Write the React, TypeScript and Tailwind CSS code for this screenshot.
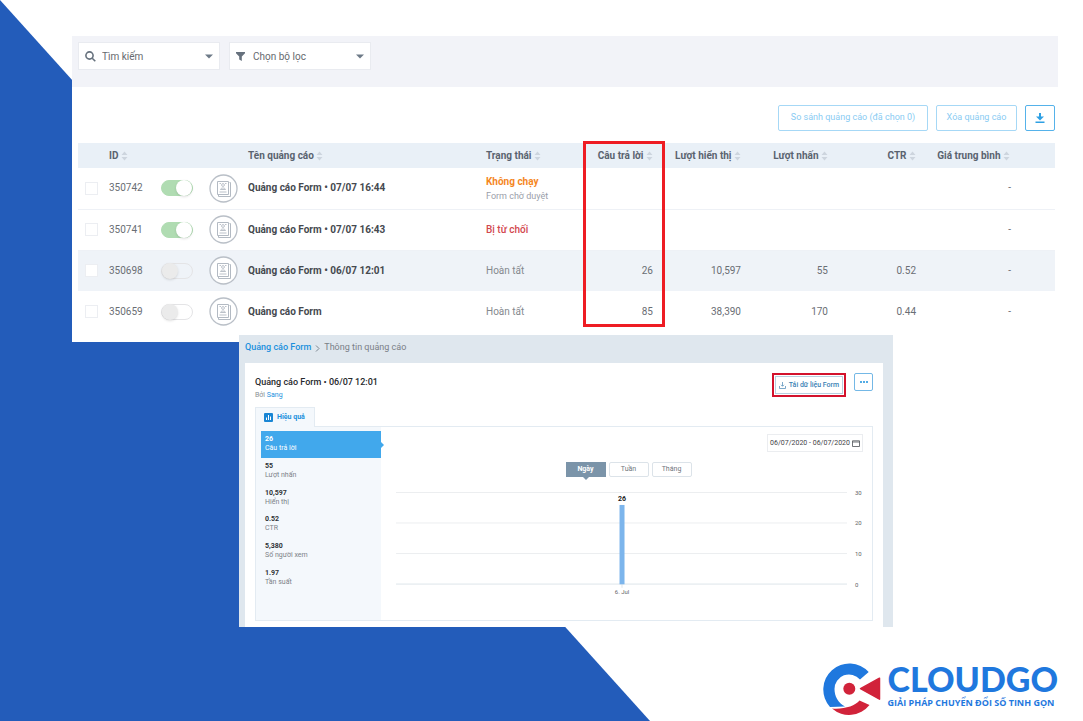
import React from 'react';

const ads = [
  { id: '350742', on: true, name: 'Quảng cáo Form • 07/07 16:44', status: 'Không chạy', note: 'Form chờ duyệt', tone: 'text-[#f5871f] font-bold', answers: '', views: '', clicks: '', ctr: '' },
  { id: '350741', on: true, name: 'Quảng cáo Form • 07/07 16:43', status: 'Bị từ chối', note: '', tone: 'text-[#d2474e] font-medium', answers: '', views: '', clicks: '', ctr: '' },
  { id: '350698', on: false, name: 'Quảng cáo Form • 06/07 12:01', status: 'Hoàn tất', note: '', tone: 'text-[#85898e]', answers: '26', views: '10,597', clicks: '55', ctr: '0.52' },
  { id: '350659', on: false, name: 'Quảng cáo Form', status: 'Hoàn tất', note: '', tone: 'text-[#85898e]', answers: '85', views: '38,390', clicks: '170', ctr: '0.44' },
];

const stats = [
  { value: '26', label: 'Câu trả lời' },
  { value: '55', label: 'Lượt nhấn' },
  { value: '10,597', label: 'Hiển thị' },
  { value: '0.52', label: 'CTR' },
  { value: '5,380', label: 'Số người xem' },
  { value: '1.97', label: 'Tần suất' },
];

const Sort: React.FC = () => (
  <svg className="inline-block w-[7px] h-[10px] align-middle" viewBox="0 0 7 10" fill="#cdd5de">
    <path d="M3.5 0.5 6.5 4h-6zM3.5 9.5l3-3.5h-6z" />
  </svg>
);

const Caret: React.FC = () => (
  <svg className="w-2 h-[5px] shrink-0" viewBox="0 0 8 5" fill="#6d7a87">
    <path d="M0 0.5h8L4 4.5z" />
  </svg>
);

const FormIcon: React.FC = () => (
  <svg className="block w-[29px] h-[29px]" viewBox="0 0 29 29" fill="none" stroke="#b3bac3">
    <circle cx="14.5" cy="14.5" r="13.5" fill="#fff" stroke="#b9bfc7" strokeWidth="1.3" />
    <path d="M8.5 7.5h11v13h-11z" />
    <path d="M20.5 8.5h1v14h-12v-1.5" />
    <circle cx="14" cy="11" r="1.4" strokeWidth="0.9" />
    <path d="M11.5 15.5c.3-2 4.7-2 5 0zM10.5 18h7M10.5 9.500h1.5M16 9.500h1.5" strokeWidth="0.9" />
  </svg>
);

const Filters: React.FC = () => (
  <div className="flex gap-[9px] h-[51px] px-[6px] pt-[6px] bg-[#f2f3f8]">
    <label className="flex items-center w-[142px] h-7 px-[6px] bg-white border border-[#e9ebf0]">
      <svg className="w-[11px] h-[11px] shrink-0" viewBox="0 0 11 11" fill="none" stroke="#66717d" strokeWidth="1.6">
        <circle cx="4.5" cy="4.5" r="3.6" />
        <path d="M7.2 7.2 10.3 10.3" />
      </svg>
      <select aria-label="Tìm kiếm" className="flex-1 min-w-0 h-full px-[6px] appearance-none bg-transparent text-[10px] text-[#66696e] outline-none">
        <option>Tìm kiếm</option>
      </select>
      <Caret />
    </label>
    <label className="flex items-center w-[142px] h-7 px-[6px] bg-white border border-[#e9ebf0]">
      <svg className="w-[9px] h-[9px] shrink-0" viewBox="0 0 9 9" fill="#66717d">
        <path d="M0 0h9v1.2L5.8 4.5V9L3.2 7.5v-3L0 1.2z" />
      </svg>
      <select aria-label="Chọn bộ lọc" className="flex-1 min-w-0 h-full px-2 appearance-none bg-transparent text-[10px] text-[#66696e] outline-none">
        <option>Chọn bộ lọc</option>
      </select>
      <Caret />
    </label>
  </div>
);

const AdTable: React.FC = () => (
  <table className="w-full table-fixed border-collapse text-[10px] leading-[14px] text-[#6a6e74]">
    <colgroup>
      <col className="w-[31px]" />
      <col className="w-[52px]" />
      <col className="w-[48px]" />
      <col className="w-[39px]" />
      <col />
      <col className="w-[90px]" />
      <col className="w-[77px]" />
      <col className="w-[88px]" />
      <col className="w-[87px]" />
      <col className="w-[88px]" />
      <col className="w-[139px]" />
    </colgroup>
    <thead>
      <tr className="h-[25px] bg-[#e9f0f7] text-[#5a636f] text-left whitespace-nowrap">
        <th></th>
        <th className="font-bold">ID <Sort /></th>
        <th></th>
        <th></th>
        <th className="font-bold">Tên quảng cáo <Sort /></th>
        <th className="font-bold">Trạng thái <Sort /></th>
        <th className="relative font-bold text-right">
          Câu trả lời <Sort />
          <span className="absolute -top-[2px] left-[7px] -right-[12px] h-[186px] border-3 border-[#ee1c23]"></span>
        </th>
        <th className="font-bold text-right">Lượt hiển thị <Sort /></th>
        <th className="font-bold text-right">Lượt nhấn <Sort /></th>
        <th className="font-bold text-right">CTR <Sort /></th>
        <th className="font-bold text-right pr-[45px]">Giá trung bình <Sort /></th>
      </tr>
    </thead>
    <tbody>
      {ads.map((ad) => (
        <tr key={ad.id} className={`h-[41px] ${ad.id === '350698' ? 'bg-[#eff3f8]' : 'border-b border-[#eef1f6] last:border-0'}`}>
          <td className="pl-[7px]">
            <input type="checkbox" aria-label={ad.id} className="block w-[13px] h-[13px] appearance-none bg-white border border-[#eceef2]" />
          </td>
          <td>{ad.id}</td>
          <td>
            <button
              role="switch"
              aria-checked={ad.on}
              aria-label={ad.name}
              className={`flex items-center w-8 h-4 rounded-full border ${ad.on ? 'justify-end bg-[#b0dcb2] border-[#b0dcb2]' : 'bg-transparent border-[#e4e4e6]'}`}
            >
              <span className={`w-4 h-4 rounded-full shadow ${ad.on ? 'bg-white' : 'bg-[#ebebeb]'}`}></span>
            </button>
          </td>
          <td><FormIcon /></td>
          <td className="font-bold text-[#45494f]">{ad.name}</td>
          <td className={`whitespace-nowrap ${ad.note ? 'pt-[2px]' : ''}`}>
            <div className={ad.tone}>{ad.status}</div>
            {ad.note && <div className="text-[9px] text-[#9a9eaa]">{ad.note}</div>}
          </td>
          <td className="text-right">{ad.answers}</td>
          <td className="text-right">{ad.views}</td>
          <td className="text-right">{ad.clicks}</td>
          <td className="text-right">{ad.ctr}</td>
          <td className="text-right pr-[44px]">-</td>
        </tr>
      ))}
    </tbody>
  </table>
);

const Chart: React.FC = () => (
  <svg className="block w-full" viewBox="0 0 468 112" fontSize="6" fill="#5f6468">
    {[30, 20, 10, 0].map((tick, i) => (
      <g key={tick}>
        <path d={`M0 ${5.5 + i * 30.6}H452`} stroke={tick === 0 ? '#dde5ea' : '#eceef0'} />
        <text x="460" y={8 + i * 30.6}>{tick}</text>
      </g>
    ))}
    <path d="M226.5 97v4" stroke="#dde5ea" />
    <rect x="224" y="18" width="5" height="79.5" fill="#7cb5ec" />
    <text x="226.5" y="14" fontWeight="700" fontSize="7" textAnchor="middle" fill="#222">26</text>
    <text x="226.5" y="107" textAnchor="middle">6. Jul</text>
  </svg>
);

const Detail: React.FC = () => (
  <section className="relative -mt-[7px] ml-[239px] mr-[190px] h-[292px] pl-[6px] pr-[10px] bg-[#dfe7ee] flex flex-col">
    <nav className="flex items-center gap-1 h-[28px] pb-[2px] shrink-0 text-[9px] text-[#7a8087]">
      <a href="#forms" className="font-medium text-[#1a90dd]">Quảng cáo Form</a>
      <svg className="w-[5px] h-[7px]" viewBox="0 0 5 7" fill="none" stroke="#7b858f"><path d="M1 0.5 4 3.5 1 6.5" /></svg>
      <span>Thông tin quảng cáo</span>
    </nav>
    <div className="flex-1 px-[10px] pt-[10px] bg-white">
      <div className="flex items-start justify-between">
        <div>
          <h1 className="text-[9px] leading-[18px] font-medium text-[#26292c]">Quảng cáo Form • 06/07 12:01</h1>
          <p className="text-[7px] leading-[8px] text-[#8a8f94]">Bởi <a href="#sang" className="text-[#1a90dd]">Sang</a></p>
        </div>
        <div className="flex items-start gap-2">
          <div className="p-px border-2 border-[#d3122c]">
            <button className="flex items-center justify-center gap-[3px] w-[68px] h-[18px] border border-[#b8cfe0] text-[7px] font-medium text-[#397fb4]">
              <svg className="w-[7px] h-[7px]" viewBox="0 0 7 7" fill="none" stroke="#5c93bd" strokeWidth="0.8"><path d="M3.5 0v4M2 2.8l1.5 1.5L5 2.8M0.5 4v2.5h6V4" /></svg>
              Tải dữ liệu Form
            </button>
          </div>
          <button aria-label="Thêm" className="flex items-center justify-center w-[19px] h-[18px] border border-[#74b8e6] rounded-xs">
            <svg className="w-2 h-[2px]" viewBox="0 0 8 2" fill="#1a90dd"><circle cx="1" cy="1" r="1" /><circle cx="4" cy="1" r="1" /><circle cx="7" cy="1" r="1" /></svg>
          </button>
        </div>
      </div>
      <button className="relative flex items-center gap-1 w-[60px] h-[20px] mt-2 -mb-px pl-2 bg-[#f4f8fc] border border-b-0 border-[#e3ebf2] text-[7px] font-bold text-[#1a90dd]">
        <svg className="w-[9px] h-[9px]" viewBox="0 0 9 9"><rect width="9" height="9" rx="1" fill="#1a86d4" /><path d="M2.5 7V4.5M4.5 7V2M6.5 7V3.5" stroke="#fff" /></svg>
        Hiệu quả
      </button>
      <div className="flex h-[195px] border border-[#e3ebf2]">
        <div className="w-[125px] pl-[5px] pt-1 bg-[#f4f8fc] shrink-0">
          <ul className="grid grid-rows-6 h-[160px] text-[7px] leading-[9px]">
            {stats.map((s, i) => (
              <li key={s.label} className={`relative flex flex-col justify-center pl-1 ${i === 0 ? 'bg-[#41a8ec] text-white' : 'text-[#7c8288]'}`}>
                <b className={i === 0 ? '' : 'text-[#2f3337]'}>{s.value}</b>
                <span>{s.label}</span>
                {i === 0 && <span className="absolute -right-[3px] top-[11px] border-y-3 border-l-3 border-y-transparent border-l-[#41a8ec]"></span>}
              </li>
            ))}
          </ul>
        </div>
        <div className="flex-1 pl-[15px] pr-[9px] pt-[7px]">
          <button className="flex items-center justify-center gap-[2px] ml-auto w-[96px] h-[18px] border border-[#ebedf0] text-[7px] text-[#3f4347]">
            06/07/2020 - 06/07/2020
            <svg className="w-2 h-[7px]" viewBox="0 0 8 7" fill="none" stroke="#4c5156" strokeWidth="0.8"><path d="M0.5 0.8h7v5.7h-7zM0.5 2h7" /></svg>
          </button>
          <div className="flex justify-center gap-[3px] mt-[10px] pr-[2px] text-[7px] text-[#6f757c]">
            <button className="relative w-10 h-[15px] bg-[#7b94a9] font-bold text-white">
              Ngày
              <span className="absolute left-[17px] top-full border-x-3 border-t-3 border-x-transparent border-t-[#7b94a9]"></span>
            </button>
            <button className="w-10 h-[15px] border border-[#dce3e9] rounded-xs">Tuần</button>
            <button className="w-10 h-[15px] border border-[#dce3e9] rounded-xs">Tháng</button>
          </div>
          <div className="mt-[10px]"><Chart /></div>
        </div>
      </div>
    </div>
  </section>
);

const Logo: React.FC = () => (
  <div className="flex items-center gap-[7px]">
    <svg className="w-[59px] h-[54px]" viewBox="0 0 59 54">
      <path d="M46.7 10.1A26 26 0 1 0 8 45C13 44.6 18 44.8 23 44.5C16 41 12.5 34 12.5 27A14.5 14.5 0 0 1 38 17.5z" fill="#1f78de" />
      <path d="M10 46.5C22 47.5 33 44 37.5 38.5L47.5 43A26 26 0 0 1 10 46.5z" fill="#d1233a" />
      <circle cx="27.3" cy="26.7" r="6" fill="#d1233a" />
      <path d="M38.500 26.700 57.500 16.200v21z" fill="#d1233a" stroke="#d1233a" strokeWidth="1.500" strokeLinejoin="round" />
    </svg>
    <div className="pb-[6px] whitespace-nowrap">
      <p className="font-['Lato',sans-serif] text-[34px] leading-[34px] font-black text-[#1f78de]">CLOUDGO</p>
      <p className="font-['Open_Sans',sans-serif] text-[9px] leading-[14px] font-bold text-[#1f78de]">GIẢI PHÁP CHUYỂN ĐỔI SỐ TINH GỌN</p>
    </div>
  </div>
);

const App: React.FC = () => {
  return (
    <div className="relative min-h-screen bg-white font-['Roboto',sans-serif] overflow-hidden">
      <svg className="absolute inset-0 w-full h-full" viewBox="0 0 1083 721" preserveAspectRatio="none">
        <path d="M0 0 650 721H0z" fill="#235cba" />
      </svg>
      <main className="relative pt-9">
        <section className="ml-[72px] mr-[25px] pb-[10px] bg-white">
          <Filters />
          <div className="flex justify-end gap-2 pt-[18px] pb-[12px] pr-[3px] text-[9px] text-[#8accf3]">
            <button className="w-[150px] h-[26px] border border-[#a6d8f6] rounded-xs">So sánh quảng cáo (đã chọn 0)</button>
            <button className="w-[81px] h-[26px] border border-[#a6d8f6] rounded-xs">Xóa quảng cáo</button>
            <button aria-label="Tải xuống" className="flex items-center justify-center w-[30px] h-[26px] border border-[#55b2ea] rounded-xs">
              <svg className="w-[10px] h-[10px]" viewBox="0 0 10 10" fill="#2ea0e4"><path d="M4 0h2v3.5h3L5 7.5 1 3.5h3zM0.5 8.5h9V10h-9z" /></svg>
            </button>
          </div>
          <div className="pl-[6px] pr-[3px]">
            <AdTable />
          </div>
        </section>
        <Detail />
        <footer className="flex justify-end pt-[35px] pr-[25px]">
          <Logo />
        </footer>
      </main>
    </div>
  );
};

export default App;
